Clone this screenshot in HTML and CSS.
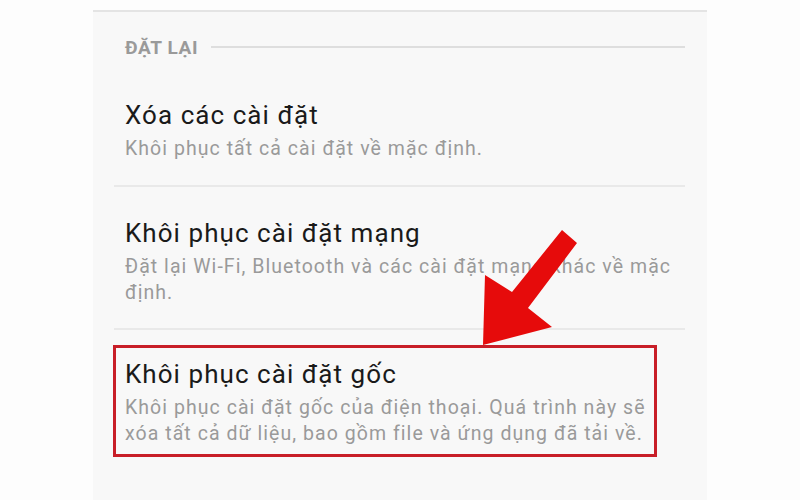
FILE: index.html
```html
<!DOCTYPE html>
<html lang="vi">
<head>
<meta charset="utf-8">
<title>Đặt lại</title>
<link rel="stylesheet" href="styles.css">
</head>
<body>
<div class="page">
  <section class="panel">
    <div class="section-head">
      <span class="section-title">ĐẶT LẠI</span>
      <span class="section-line"></span>
    </div>
    <div class="item">
      <div class="item-title">Xóa các cài đặt</div>
      <div class="item-sub">Khôi phục tất cả cài đặt về mặc định.</div>
    </div>
    <div class="item">
      <div class="item-title">Khôi phục cài đặt mạng</div>
      <div class="item-sub">Đặt lại Wi-Fi, Bluetooth và các cài đặt mạng khác về mặc<br>định.</div>
    </div>
    <div class="item item-last">
      <div class="highlight">
        <div class="item-title">Khôi phục cài đặt gốc</div>
        <div class="item-sub">Khôi phục cài đặt gốc của điện thoại. Quá trình này sẽ<br>xóa tất cả dữ liệu, bao gồm file và ứng dụng đã tải về.</div>
      </div>
    </div>
  </section>
  <svg class="arrow" width="800" height="500" viewBox="0 0 800 500" aria-hidden="true">
    <polygon points="562,230 577,243 528,308 552,327 483,345 485,275 512,292" fill="#e60b0b"/>
  </svg>
</div>
</body>
</html>
```
FILE: styles.css
```css
html, body {
  margin: 0;
  padding: 0;
  background: #fdfdfd;
}
body {
  font-family: Roboto, "Noto Sans", "Liberation Sans", sans-serif;
  width: 800px;
  height: 500px;
  overflow: hidden;
}
.page {
  position: relative;
  width: 800px;
  height: 500px;
  padding-top: 10px;
  box-sizing: border-box;
}
.panel {
  margin-left: 93px;
  width: 614px;
  height: 490px;
  box-sizing: border-box;
  background: #f8f8f8;
  border-top: 2px solid #e4e4e4;
  padding: 26px 22px 0 21px;
}
.section-head {
  display: flex;
  align-items: center;
  gap: 13px;
  padding-left: 11px;
  height: 20px;
}
.section-title {
  font-size: 19px;
  line-height: 20px;
  font-weight: 700;
  letter-spacing: 0.6px;
  color: #9a9a9a;
  white-space: nowrap;
}
.section-line {
  flex: 1;
  height: 2px;
  background: #dedede;
  margin-top: -2px;
}
.item {
  padding: 31px 0 22px 11px;
  border-bottom: 2px solid #e9e9e9;
}
.section-head + .item {
  padding-top: 42px;
  padding-bottom: 23px;
}
.item-title {
  font-size: 26px;
  line-height: 30px;
  letter-spacing: 1.05px;
  color: #1a1a1a;
  margin-bottom: 6px;
  white-space: nowrap;
}
.item-sub {
  font-size: 19.5px;
  line-height: 26px;
  letter-spacing: 1.05px;
  color: #9a9a9a;
  white-space: nowrap;
}
.item-last {
  border-bottom: none;
  padding: 15px 0 0 0;
}
.highlight {
  width: 544px;
  box-sizing: border-box;
  margin-left: -1px;
  border: 3px solid #c81e28;
  padding: 11px 0 7px 9px;
}
.arrow {
  position: absolute;
  left: 0;
  top: 0;
}
```
